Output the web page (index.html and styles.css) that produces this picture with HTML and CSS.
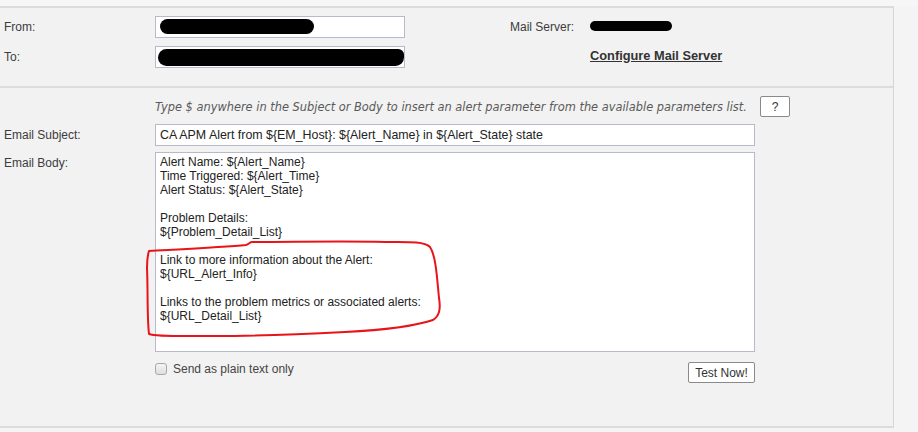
FILE: index.html
```html
<!DOCTYPE html>
<html>
<head>
<meta charset="utf-8">
<link rel="stylesheet" href="styles.css">
</head>
<body>
<div class="page">
  <div class="panel">
    <section class="server">
      <label class="lbl">From:</label>
      <div class="field"><span class="redact r-from"></span></div>
      <span></span>
      <span class="lbl">Mail Server:</span>
      <span class="srv"><span class="redact r-srv"></span></span>

      <label class="lbl">To:</label>
      <div class="field"><span class="redact r-to"></span></div>
      <span></span>
      <span></span>
      <a class="cfg" href="#">Configure Mail Server</a>
    </section>

    <section class="mail">
      <span></span>
      <div class="hint-row">
        <span class="hint">Type $ anywhere in the Subject or Body to insert an alert parameter from the available parameters list.</span>
        <button class="btn q">?</button>
      </div>

      <label class="lbl">Email Subject:</label>
      <div class="field subject">CA APM Alert from ${EM_Host}: ${Alert_Name} in ${Alert_State} state</div>

      <label class="lbl">Email Body:</label>
      <div class="body-wrap">
        <div class="field body">Alert Name: ${Alert_Name}
Time Triggered: ${Alert_Time}
Alert Status: ${Alert_State}

Problem Details:
${Problem_Detail_List}

Link to more information about the Alert:
${URL_Alert_Info}

Links to the problem metrics or associated alerts:
${URL_Detail_List}</div>
        <svg class="mark" width="310" height="110" viewBox="0 0 310 110">
          <path d="M4 13 C40 11 80 9 101 7 C104 6 105 4 107 4 C150 4 200 3 240 4 C262 4 279 3 285 9 C291 18 292 40 294 60 C296 72 294 78 288 82 C270 88 240 92 200 94 C160 96 110 98 70 98 C40 98 12 99 4 96 C2 80 3 50 2 30 C2 22 3 16 4 13 Z" fill="none" stroke="#e8141a" stroke-width="2" stroke-linejoin="round"/>
        </svg>
      </div>

      <span></span>
      <div class="foot">
        <label class="chk"><span class="box"></span>Send as plain text only</label>
        <button class="btn test">Test Now!</button>
      </div>
    </section>
  </div>
  <div class="side"></div>
</div>
</body>
</html>
```

FILE: styles.css
```css
html, body {
  margin: 0;
  padding: 0;
}
body {
  background: #f4f4f4;
  font-family: "Liberation Sans", Arial, sans-serif;
  font-size: 12px;
  color: #3a3a3a;
  width: 918px;
  height: 432px;
  overflow: hidden;
}
.page {
  display: flex;
  padding-top: 6px;
  background: #f6f6f6;
}
.panel {
  width: 893px;
  background: #f2f2f2;
  border-top: 2px solid #dcdcdc;
  border-right: 1px solid #d6d6d6;
  border-bottom: 2px solid #dcdcdc;
}
.side {
  flex: 1;
  background: #f4f4f4;
}
.lbl {
  color: #3c3c3c;
  line-height: 22px;
}
.server {
  display: grid;
  grid-template-columns: 151px 250px 105px 80px auto;
  grid-auto-rows: 22px;
  row-gap: 8px;
  padding: 8px 0 18px 4px;
  border-bottom: 2px solid #dcdcdc;
  align-items: center;
}
.field {
  position: relative;
  box-sizing: border-box;
  background: #fff;
  border: 1px solid #b7bacb;
  height: 22px;
}
.redact {
  position: absolute;
  background: #000;
  border-radius: 8px;
}
.r-from {
  left: 4px;
  top: 2px;
  width: 154px;
  height: 15px;
}
.r-to {
  left: 2px;
  top: 2px;
  width: 246px;
  height: 17px;
  border-radius: 9px 6px 9px 9px;
}
.srv {
  position: relative;
  height: 22px;
}
.r-srv {
  left: 0;
  top: 5px;
  width: 82px;
  height: 10px;
  border-radius: 5px;
}
.cfg {
  color: #333;
  font-weight: bold;
  text-decoration: underline;
  font-size: 12.8px;
  align-self: center;
  margin-top: -4px;
}
.mail {
  display: grid;
  grid-template-columns: 151px 600px;
  padding: 8px 0 0 4px;
  height: 330px;
  align-content: start;
}
.hint-row {
  display: flex;
  justify-content: space-between;
  align-items: center;
  width: 635px;
  height: 21px;
  margin-bottom: 7px;
}
.hint {
  font-family: "DejaVu Sans", Verdana, sans-serif;
  font-style: italic;
  font-size: 11.4px;
  color: #5a5a5a;
  letter-spacing: 0;
}
.btn {
  box-sizing: border-box;
  background: #fff;
  border: 1px solid #8a8a8a;
  border-radius: 2px;
  font-family: "Liberation Sans", Arial, sans-serif;
  font-size: 12px;
  color: #333;
  padding: 0;
}
.q {
  width: 30px;
  height: 21px;
}
.subject {
  line-height: 20px;
  padding-left: 4px;
  color: #222;
  font-size: 12.4px;
  margin-bottom: 6px;
}
.body-wrap {
  position: relative;
}
.body {
  height: 200px;
  white-space: pre;
  padding: 2px 4px;
  line-height: 14px;
  color: #222;
}
.mark {
  position: absolute;
  left: -10px;
  top: 86px;
}
.foot {
  display: flex;
  justify-content: space-between;
  align-items: flex-start;
  margin-top: 10px;
}
.chk {
  display: flex;
  align-items: center;
  gap: 6px;
  color: #444;
  font-size: 12px;
  line-height: 14px;
}
.box {
  box-sizing: border-box;
  width: 12px;
  height: 12px;
  border: 1px solid #a8a8a8;
  border-radius: 3px;
  background: linear-gradient(#f4f4f4, #dedede);
}
.test {
  width: 67px;
  height: 21px;
}
```
